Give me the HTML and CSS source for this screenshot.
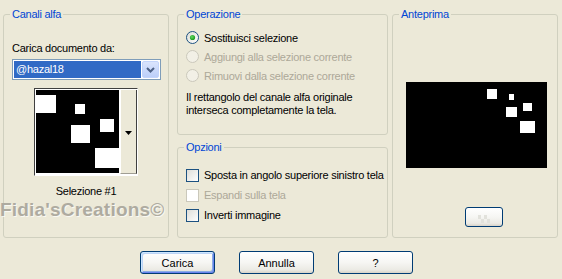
FILE: index.html
```html
<!DOCTYPE html>
<html lang="it">
<head>
<meta charset="utf-8">
<title>Carica da canale alfa</title>
<link rel="stylesheet" href="styles.css">
</head>
<body>
<div class="dialog">
  <div class="groups">
    <fieldset class="group group-left">
      <legend>Canali alfa</legend>
      <div class="field-label">Carica documento da:</div>
      <div class="combo">
        <div class="combo-value">@hazal18</div>
        <div class="combo-btn">
          <svg width="9" height="6" viewBox="0 0 9 6"><path d="M1 1 L4.5 4.5 L8 1" fill="none" stroke="#4d6185" stroke-width="2"/></svg>
        </div>
      </div>
      <div class="thumb">
        <svg class="thumb-img" width="83" height="83" viewBox="0 0 83 83">
          <rect width="83" height="83" fill="#000"/>
          <rect x="0" y="5" width="20" height="18" fill="#fff"/>
          <rect x="39" y="14" width="10" height="10" fill="#fff"/>
          <rect x="64" y="29" width="14" height="13" fill="#fff"/>
          <rect x="35" y="35" width="19" height="18" fill="#fff"/>
          <rect x="59" y="58" width="24" height="20" fill="#fff"/>
        </svg>
        <div class="thumb-btn">
          <svg width="7" height="4" viewBox="0 0 7 4"><path d="M0 0 H7 L3.5 4 Z" fill="#000"/></svg>
        </div>
      </div>
      <div class="thumb-caption">Selezione #1</div>
    </fieldset>

    <div class="middle">
      <fieldset class="group group-op">
        <legend>Operazione</legend>
        <div class="row">
          <svg class="ctl" width="13" height="13" viewBox="0 0 13 13">
            <defs><linearGradient id="rg" x1="0" y1="0" x2="1" y2="1"><stop offset="0" stop-color="#dcdcd4"/><stop offset="1" stop-color="#ffffff"/></linearGradient>
            <radialGradient id="dot" cx="0.4" cy="0.4" r="0.6"><stop offset="0" stop-color="#62d862"/><stop offset="1" stop-color="#1b9a1b"/></radialGradient></defs>
            <circle cx="6.5" cy="6.5" r="6" fill="url(#rg)" stroke="#1c5180" stroke-width="1"/>
            <circle cx="6.5" cy="6.5" r="2.6" fill="url(#dot)"/>
          </svg>
          <span>Sostituisci selezione</span>
        </div>
        <div class="row disabled">
          <svg class="ctl" width="13" height="13" viewBox="0 0 13 13"><circle cx="6.5" cy="6.5" r="6" fill="#f2f0e6" stroke="#cac8bb" stroke-width="1"/></svg>
          <span>Aggiungi alla selezione corrente</span>
        </div>
        <div class="row disabled">
          <svg class="ctl" width="13" height="13" viewBox="0 0 13 13"><circle cx="6.5" cy="6.5" r="6" fill="#f2f0e6" stroke="#cac8bb" stroke-width="1"/></svg>
          <span>Rimuovi dalla selezione corrente</span>
        </div>
        <p class="note">Il rettangolo del canale alfa originale<br>interseca completamente la tela.</p>
      </fieldset>

      <fieldset class="group group-opt">
        <legend>Opzioni</legend>
        <div class="row check-row">
          <svg class="ctl" width="13" height="13" viewBox="0 0 13 13">
            <defs><linearGradient id="cg" x1="0" y1="0" x2="1" y2="1"><stop offset="0" stop-color="#dcdcd7"/><stop offset="1" stop-color="#ffffff"/></linearGradient></defs>
            <rect x="0.5" y="0.5" width="12" height="12" fill="url(#cg)" stroke="#1c5180"/>
          </svg>
          <span>Sposta in angolo superiore sinistro tela</span>
        </div>
        <div class="row check-row disabled">
          <svg class="ctl" width="13" height="13" viewBox="0 0 13 13"><rect x="0.5" y="0.5" width="12" height="12" fill="#ffffff" stroke="#cac8bb"/></svg>
          <span>Espandi sulla tela</span>
        </div>
        <div class="row check-row">
          <svg class="ctl" width="13" height="13" viewBox="0 0 13 13"><rect x="0.5" y="0.5" width="12" height="12" fill="url(#cg)" stroke="#1c5180"/></svg>
          <span>Inverti immagine</span>
        </div>
      </fieldset>
    </div>

    <fieldset class="group group-right">
      <legend>Anteprima</legend>
      <svg class="preview" width="141" height="86" viewBox="0 0 141 86">
        <rect width="141" height="86" fill="#000"/>
        <rect x="81" y="7" width="10" height="10" fill="#fff"/>
        <rect x="103" y="12" width="5" height="6" fill="#fff"/>
        <rect x="117" y="21" width="9" height="8" fill="#fff"/>
        <rect x="100" y="25" width="11" height="10" fill="#fff"/>
        <rect x="114" y="39" width="15" height="12" fill="#fff"/>
      </svg>
      <button class="btn small-btn" type="button" aria-label="Sfondo">
        <svg width="12" height="8" viewBox="0 0 12 8">
          <rect x="0" y="0" width="3" height="4" fill="#e2e2dc"/>
          <rect x="6" y="0" width="3" height="4" fill="#e2e2dc"/>
          <rect x="3" y="4" width="3" height="4" fill="#e2e2dc"/>
          <rect x="9" y="4" width="3" height="4" fill="#e2e2dc"/>
        </svg>
      </button>
    </fieldset>
  </div>

  <div class="buttons">
    <button class="btn default" type="button">Carica</button>
    <button class="btn" type="button">Annulla</button>
    <button class="btn" type="button">?</button>
  </div>

  <div class="watermark">Fidia'sCreations©</div>
</div>
</body>
</html>
```

FILE: styles.css
```css
html, body {
  margin: 0;
  padding: 0;
  background: #ece9d8;
}

body {
  width: 562px;
  height: 279px;
  overflow: hidden;
  font-family: "Liberation Sans", Arial, sans-serif;
  font-size: 11px;
  letter-spacing: -0.25px;
  color: #000;
}

.dialog {
  position: relative;
  padding: 8px 0 0 3px;
}

.groups {
  display: flex;
  align-items: flex-start;
}

.group {
  margin: 0;
  border: 1px solid #d0d0bf;
  border-radius: 3px;
  padding: 0 8px;
  min-width: 0;
  box-sizing: border-box;
}

.group legend {
  color: #0046d5;
  line-height: 13px;
  padding: 0 2px;
  margin-left: -2px;
}

.group-left {
  width: 166px;
  height: 230px;
  display: flex;
  flex-direction: column;
}

.field-label {
  margin-top: 21px;
  line-height: 13px;
}

.combo {
  margin-top: 4px;
  width: 149px;
  height: 21px;
  box-sizing: border-box;
  border: 1px solid #7f9db9;
  background: #fff;
  display: flex;
  padding: 1px;
}

.combo-value {
  flex: 1;
  background: #316ac5;
  color: #fff;
  line-height: 17px;
  padding-left: 2px;
  margin-right: 1px;
}

.combo-btn {
  width: 17px;
  height: 17px;
  box-sizing: border-box;
  border: 1px solid #c3d4fb;
  border-radius: 2px;
  background: linear-gradient(to bottom, #dae4fd, #bccff9);
  display: flex;
  align-items: center;
  justify-content: center;
}

.thumb {
  margin-top: 8px;
  align-self: center;
  width: 104px;
  height: 88px;
  box-sizing: border-box;
  border: 1px solid;
  border-color: #404040 #ffffff #ffffff #404040;
  background: #fff;
  padding: 1px 0 1px 1px;
  display: flex;
}

.thumb-img {
  display: block;
}

.thumb-btn {
  flex: 1;
  margin-left: 1px;
  background: #ece9d8;
  border-left: 1px solid #fff;
  border-right: 1px solid #404040;
  border-bottom: 1px solid #a09e94;
  display: flex;
  align-items: center;
  justify-content: center;
  padding-top: 2px;
}

.thumb-caption {
  margin-top: 9px;
  line-height: 13px;
  text-align: center;
}

.middle {
  margin-left: 8px;
  display: flex;
  flex-direction: column;
  gap: 6px;
}

.group-op {
  width: 211px;
  height: 127px;
}

.group-opt {
  width: 211px;
  height: 97px;
}

.row {
  display: flex;
  align-items: center;
  height: 19px;
  gap: 5px;
  white-space: nowrap;
}

.group-op .row:first-of-type {
  margin-top: 7px;
}

.ctl {
  display: block;
  flex: none;
}

.disabled {
  color: #aca899;
}

.note {
  margin: 6px 0 0;
  line-height: 13px;
}

.check-row {
  height: 20px;
}

.group-opt .row:first-of-type {
  margin-top: 11px;
}

.group-right {
  margin-left: 4px;
  width: 166px;
  height: 230px;
  display: flex;
  flex-direction: column;
}

.preview {
  display: block;
  margin: 61px 0 0 5px;
}

.btn {
  width: 75px;
  height: 23px;
  box-sizing: border-box;
  border: 1px solid #003c74;
  border-radius: 3px;
  background: linear-gradient(to bottom, #ffffff 0%, #f6f6f3 50%, #ebeae4 85%, #d8d3c8 100%);
  font-family: "Liberation Sans", Arial, sans-serif;
  font-size: 11px;
  color: #000;
  padding: 0;
}

.btn.default {
  box-shadow: inset 1px 1px 0 #cee7ff, inset -1px -1px 0 #6982ee, inset 2px 2px 0 #bcd4f6, inset -2px -2px 0 #89ade4;
}

.small-btn {
  width: 38px;
  height: 20px;
  margin: 39px 0 0 64px;
  display: flex;
  align-items: center;
  justify-content: center;
}

.small-btn svg {
  display: block;
  margin-top: 3px;
}

.buttons {
  display: flex;
  gap: 24px;
  margin-top: 13px;
  padding-left: 137px;
}

.watermark {
  position: absolute;
  left: 0;
  top: 199px;
  font-family: "Liberation Sans", Arial, sans-serif;
  font-weight: bold;
  font-size: 19px;
  letter-spacing: 0.2px;
  color: #aeaba0;
  text-shadow: 1px 1px 0 rgba(255, 255, 255, 0.7);
  white-space: nowrap;
}
```
